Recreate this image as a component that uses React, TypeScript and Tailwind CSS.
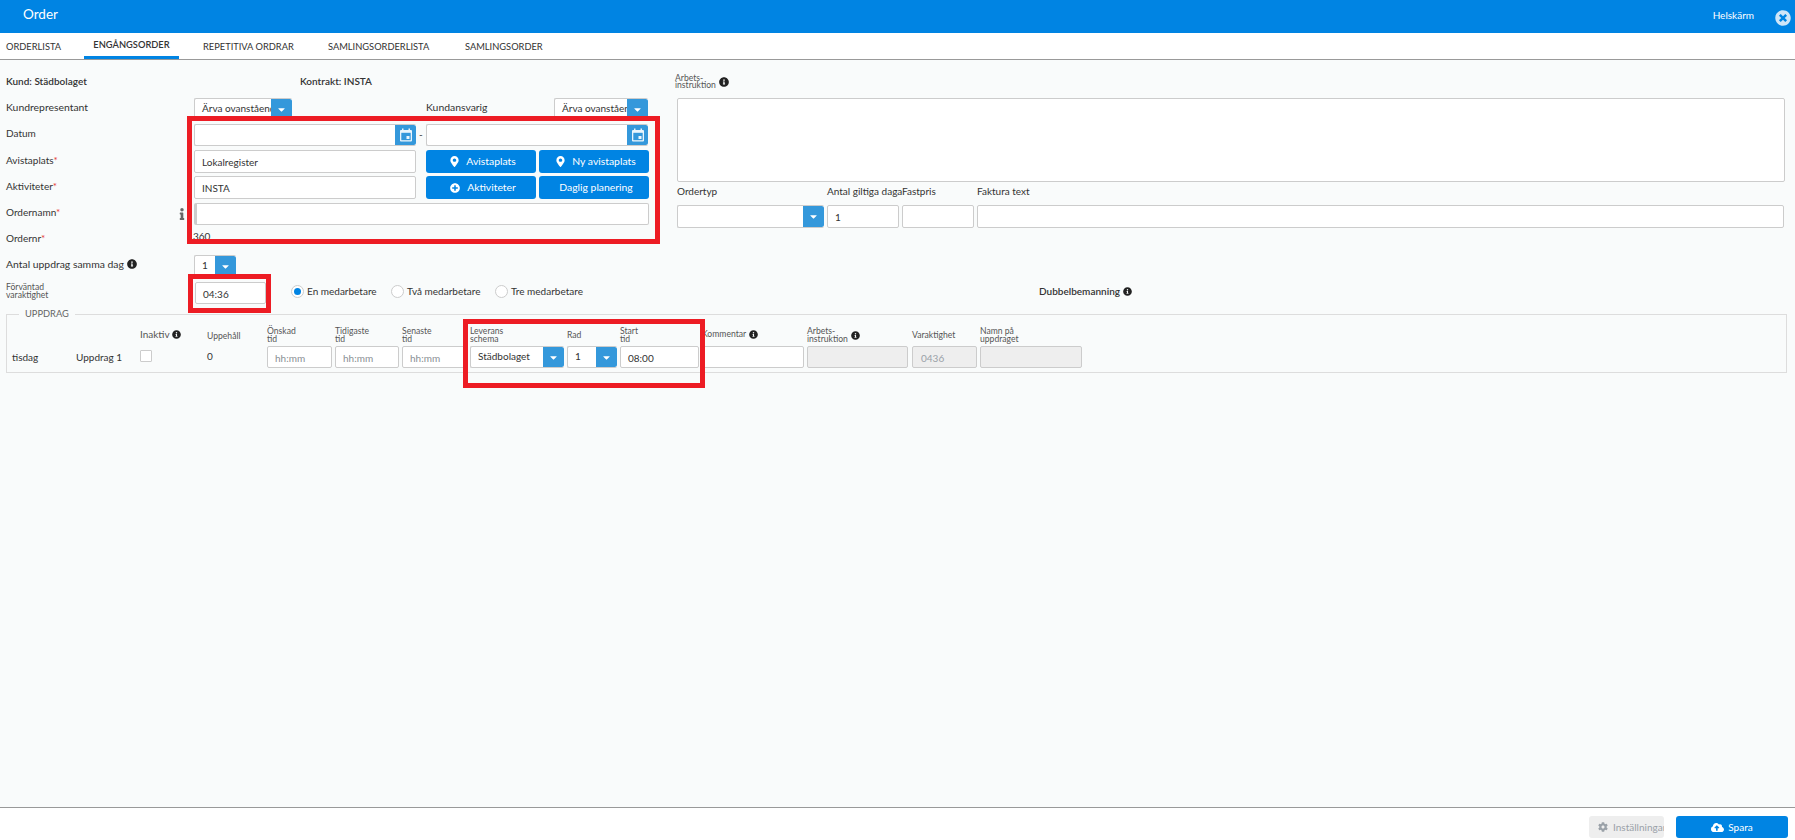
import React from 'react';
import { FaCaretDown, FaCloudUploadAlt, FaCog, FaInfo, FaInfoCircle, FaMapMarkerAlt, FaPlusCircle, FaTimesCircle } from 'react-icons/fa';

const CalendarIcon = () => (
  <svg width="14" height="14" viewBox="0 0 14 14" fill="none">
    <path d="M3 0.5h1.5V2h5V0.5H11V2h1a1 1 0 0 1 1 1v9.5a1 1 0 0 1-1 1H2a1 1 0 0 1-1-1V3a1 1 0 0 1 1-1h1z" fill="#eaf5fc" />
    <rect x="2.3" y="4.8" width="9.4" height="7.4" fill="#3498db" />
    <rect x="7.5" y="8" width="3" height="3" fill="#eaf5fc" />
  </svg>
);

const AddonButton = ({ children }: { children?: React.ReactNode }) => (
  <span className="flex h-full w-[21px] shrink-0 items-center justify-center rounded-r-[2px] bg-[#3498db] text-white">
    {children ?? <FaCaretDown className="h-[11px] w-[11px]" />}
  </span>
);

const Select = ({ value, className }: { value?: string; className: string }) => (
  <div className={`flex overflow-hidden rounded-[2px] border-l border-t border-b border-[#ccc] bg-white ${className}`}>
    <span className="min-w-0 flex-1 overflow-hidden whitespace-nowrap pl-[7px] leading-[18px]">{value}</span>
    <AddonButton />
  </div>
);

const DateInput = () => (
  <div className="flex h-[22px] w-[222px] overflow-hidden rounded-[2px] border-l border-t border-b border-[#ccc] bg-white">
    <span className="flex-1" />
    <AddonButton>
      <CalendarIcon />
    </AddonButton>
  </div>
);

const TextBox = ({ value, className, muted }: { value?: string; className: string; muted?: boolean }) => (
  <div className={`shrink-0 whitespace-nowrap rounded-[2px] border border-[#ccc] bg-white pl-[7px] leading-[22px] ${muted ? 'text-[#8a8f94]' : ''} ${className}`}>
    {value}
  </div>
);

const DisabledBox = ({ value, className }: { value?: string; className: string }) => (
  <div className={`h-[22px] shrink-0 rounded-[2px] border border-[#ccc] bg-[#eee] pl-[8px] leading-[22px] text-[#9aa1a8] ${className}`}>
    {value}
  </div>
);

const BlueButton = ({ icon, label }: { icon?: React.ReactNode; label: string }) => (
  <button className="flex h-[23px] w-[110px] items-center justify-center gap-[7px] rounded-[3px] bg-[#0084e3] pl-[4px] text-[10.4px] text-white">
    {icon}
    {label}
  </button>
);

const Required = () => <span className="text-[#e53935]">*</span>;

const FormRow = ({ label, h, mt, children }: { label: React.ReactNode; h: string; mt: string; children?: React.ReactNode }) => (
  <div className={`flex ${h} ${mt}`}>
    <div className="flex w-[188px] shrink-0 items-center pb-[3px]">{label}</div>
    {children}
  </div>
);

const SmallLabel = ({ children, className }: { children: React.ReactNode; className?: string }) => (
  <div className={`text-[8.6px] leading-[7.5px] text-[#555] ${className ?? ''}`}>{children}</div>
);

const Radio = ({ label, checked, className }: { label: string; checked?: boolean; className: string }) => (
  <div className={`flex items-center gap-[3px] ${className}`}>
    <span className="flex h-[13px] w-[13px] items-center justify-center rounded-full border border-[#ccc] bg-white">
      {checked && <span className="h-[7px] w-[7px] rounded-full bg-[#0084e3]" />}
    </span>
    {label}
  </div>
);

const Column = ({ head, width, children }: { head: React.ReactNode; width: string; children?: React.ReactNode }) => (
  <div className={`flex shrink-0 flex-col ${width}`}>
    <div className="flex h-[24px] items-end pb-[3px]">{head}</div>
    {children}
  </div>
);

export default function App() {
  return (
    <div className="relative flex h-[840px] w-[1795px] flex-col overflow-hidden bg-white font-['Lato',sans-serif] text-[10px] text-[#333]">
      {/* Header */}
      <div className="flex h-[33px] shrink-0 items-center bg-[#0084e3] pl-[23px] pr-[4px] text-white">
        <span className="pb-[5px] text-[13.5px]">Order</span>
        <span className="ml-auto pb-[3px]">Helskärm</span>
        <FaTimesCircle className="ml-[21px] mt-[3px] h-[16px] w-[16px] text-[#cfe6f8]" />
      </div>

      {/* Tabs */}
      <div className="flex h-[27px] shrink-0 items-start border-b border-[#999] pl-[6px] text-[9.3px]">
        <span className="mt-[7px] w-[78px]">ORDERLISTA</span>
        <span className="flex h-[26px] w-[95px] justify-center border-b-[3px] border-[#0084e3] pt-[5px] font-semibold">ENGÅNGSORDER</span>
        <span className="ml-[24px] mt-[7px] w-[125px]">REPETITIVA ORDRAR</span>
        <span className="mt-[7px] w-[137px]">SAMLINGSORDERLISTA</span>
        <span className="mt-[7px]">SAMLINGSORDER</span>
      </div>

      {/* Content */}
      <div className="flex min-h-0 flex-1 flex-col bg-[#f9fbfb] pl-[6px] pr-[8px] pt-[1px]">
        <div className="flex">
          <div className="w-[671px] shrink-0">
            <div className="mt-[11px] flex h-[18px] items-center font-semibold">
              <span className="w-[294px]">Kund: Städbolaget</span>
              <span>Kontrakt: INSTA</span>
            </div>
            <FormRow label={<span className="text-[10.4px]">Kundrepresentant</span>} h="h-[22px]" mt="mt-[8px]">
              <Select value="Ärva ovanstående" className="h-[22px] w-[98px]" />
              <span className="ml-[134px] w-[128px] pt-[2px] text-[10.4px]">Kundansvarig</span>
              <Select value="Ärva ovanstående" className="h-[22px] w-[94px]" />
            </FormRow>
            <FormRow label="Datum" h="h-[22px]" mt="mt-[4px]">
              <DateInput />
              <span className="w-[10px] pl-[3px] leading-[20px]">-</span>
              <DateInput />
            </FormRow>
            <FormRow label={<span>Avistaplats<Required /></span>} h="h-[23px]" mt="mt-[4px]">
              <TextBox value="Lokalregister" className="h-[23px] w-[222px]" />
              <div className="ml-[10px] flex gap-[3px]">
                <BlueButton icon={<FaMapMarkerAlt className="h-[11px] w-[9px]" />} label="Avistaplats" />
                <BlueButton icon={<FaMapMarkerAlt className="h-[11px] w-[9px]" />} label="Ny avistaplats" />
              </div>
            </FormRow>
            <FormRow label={<span>Aktiviteter<Required /></span>} h="h-[23px]" mt="mt-[3px]">
              <TextBox value="INSTA" className="h-[23px] w-[222px]" />
              <div className="ml-[10px] flex gap-[3px]">
                <BlueButton icon={<FaPlusCircle className="h-[10px] w-[10px]" />} label="Aktiviteter" />
                <BlueButton label="Daglig planering" />
              </div>
            </FormRow>
            <FormRow
              label={
                <span className="flex w-full items-center justify-between pr-[9px]">
                  <span>Ordernamn<Required /></span>
                  <FaInfo className="mt-[3px] h-[12px] w-[6px] text-[#666]" />
                </span>
              }
              h="h-[22px]"
              mt="mt-[4px]"
            >
              <TextBox className="h-[22px] w-[455px] border-l-[3px] border-l-[#ccc]" />
            </FormRow>
            <FormRow label={<span className="pt-[3px]">Ordernr<Required /></span>} h="h-[18px]" mt="mt-[4px]">
              <span className="-ml-[1px]">360</span>
            </FormRow>
            <FormRow
              label={
                <span className="flex items-center gap-[3px] text-[10.4px]">
                  Antal uppdrag samma dag <FaInfoCircle className="h-[10px] w-[10px] text-[#222]" />
                </span>
              }
              h="h-[22px]"
              mt="mt-[8px]"
            >
              <Select value="1" className="h-[22px] w-[42px]" />
            </FormRow>
          </div>

          {/* Right column */}
          <div className="min-w-0 flex-1">
            <div className="mt-[15px] flex h-[12px] items-center">
              <SmallLabel className="-ml-[2px]">Arbets-<br />instruktion</SmallLabel>
              <FaInfoCircle className="ml-[3px] h-[10px] w-[10px] text-[#222]" />
            </div>
            <div className="mt-[10px] h-[84px] w-[1108px] rounded-[2px] border border-[#ccc] bg-white" />
            <div className="flex h-[19px] items-center">
              <span className="w-[150px]">Ordertyp</span>
              <span className="w-[75px] whitespace-nowrap">Antal giltiga daga</span>
              <span className="w-[75px]">Fastpris</span>
              <span>Faktura text</span>
            </div>
            <div className="mt-[4px] flex gap-[3px]">
              <Select className="h-[23px] w-[147px]" />
              <TextBox value="1" className="h-[23px] w-[72px]" />
              <TextBox className="h-[23px] w-[72px]" />
              <TextBox className="h-[23px] w-[807px]" />
            </div>
          </div>
        </div>

        {/* Förväntad varaktighet */}
        <div className="mt-[5px] flex h-[22px] items-center">
          <SmallLabel className="w-[189px] pb-[3px]">Förväntad<br />varaktighet</SmallLabel>
          <TextBox value="04:36" className="h-[22px] w-[71px]" />
          <Radio label="En medarbetare" checked className="ml-[25px] w-[100px] pb-[3px]" />
          <Radio label="Två medarbetare" className="w-[104px] pb-[3px]" />
          <Radio label="Tre medarbetare" className="w-[544px] pb-[3px]" />
          <span className="flex items-center gap-[3px] pb-[3px] font-semibold">
            Dubbelbemanning <FaInfoCircle className="h-[9px] w-[9px] text-[#222]" />
          </span>
        </div>

        {/* Uppdrag */}
        <fieldset className="mt-[5px] h-[64px] w-[1781px] border border-[#ddd] pl-[5px]">
          <legend className="ml-[7px] px-[6px] text-[9.3px] leading-[10px] text-[#666]">UPPDRAG</legend>
          <div className="mt-[3px] flex items-start">
            <div className="mt-[24px] flex h-[22px] w-[128px] shrink-0 items-center">
              <span className="w-[64px]">tisdag</span>
              <span>Uppdrag 1</span>
            </div>
            <Column
              width="w-[67px]"
              head={
                <span className="flex items-center gap-[2px] pb-[1px] text-[#555]">
                  Inaktiv <FaInfoCircle className="h-[9px] w-[9px] text-[#222]" />
                </span>
              }
            >
              <span className="mt-[4px] h-[12px] w-[12px] rounded-[1px] border border-[#ccc] bg-white" />
            </Column>
            <Column width="w-[60px]" head={<SmallLabel className="mb-[3px]">Uppehåll</SmallLabel>}>
              <span className="leading-[20px]">0</span>
            </Column>
            <Column width="w-[68px]" head={<SmallLabel>Önskad<br />tid</SmallLabel>}>
              <TextBox value="hh:mm" muted className="h-[22px] w-[65px]" />
            </Column>
            <Column width="w-[67px]" head={<SmallLabel>Tidigaste<br />tid</SmallLabel>}>
              <TextBox value="hh:mm" muted className="h-[22px] w-[64px]" />
            </Column>
            <Column width="w-[68px]" head={<SmallLabel>Senaste<br />tid</SmallLabel>}>
              <TextBox value="hh:mm" muted className="h-[22px] w-[65px]" />
            </Column>
            <Column width="w-[97px]" head={<SmallLabel>Leverans<br />schema</SmallLabel>}>
              <Select value="Städbolaget" className="h-[22px] w-[94px]" />
            </Column>
            <Column width="w-[53px]" head={<SmallLabel className="mb-[4px]">Rad</SmallLabel>}>
              <Select value="1" className="h-[22px] w-[50px]" />
            </Column>
            <Column width="w-[82px]" head={<SmallLabel>Start<br />tid</SmallLabel>}>
              <TextBox value="08:00" className="h-[22px] w-[79px]" />
            </Column>
            <Column
              width="w-[105px]"
              head={
                <span className="flex items-center gap-[3px] pb-[4px]">
                  <SmallLabel>Kommentar</SmallLabel>
                  <FaInfoCircle className="h-[9px] w-[9px] text-[#222]" />
                </span>
              }
            >
              <TextBox className="h-[22px] w-[102px]" />
            </Column>
            <Column
              width="w-[105px]"
              head={
                <span className="flex items-center gap-[3px]">
                  <SmallLabel>Arbets-<br />instruktion</SmallLabel>
                  <FaInfoCircle className="h-[9px] w-[9px] text-[#222]" />
                </span>
              }
            >
              <DisabledBox className="w-[101px]" />
            </Column>
            <Column width="w-[68px]" head={<SmallLabel className="mb-[4px]">Varaktighet</SmallLabel>}>
              <DisabledBox value="0436" className="w-[65px]" />
            </Column>
            <Column width="w-[102px]" head={<SmallLabel>Namn på<br />uppdraget</SmallLabel>}>
              <DisabledBox className="w-[102px]" />
            </Column>
          </div>
        </fieldset>
      </div>

      {/* Footer */}
      <div className="flex h-[33px] shrink-0 items-start justify-end gap-[12px] border-t border-[#999] pr-[7px] pt-[8px]">
        <button className="flex h-[22px] w-[75px] items-center gap-[5px] overflow-hidden whitespace-nowrap rounded-[3px] bg-[#eee] pl-[9px] text-[#9aa1a8]">
          <FaCog className="h-[10px] w-[10px] shrink-0" />
          Inställningar
        </button>
        <button className="flex h-[22px] w-[112px] items-center justify-center gap-[4px] rounded-[3px] bg-[#0084e3] text-white">
          <FaCloudUploadAlt className="h-[13px] w-[13px]" />
          Spara
        </button>
      </div>

      {/* Red annotation boxes */}
      <div className="absolute left-[187px] top-[116px] h-[128px] w-[473px] border-[5px] border-[#ed1c24]" />
      <div className="absolute left-[188px] top-[274px] h-[39px] w-[83px] border-[5px] border-[#ed1c24]" />
      <div className="absolute left-[463px] top-[319px] h-[69px] w-[242px] border-[5px] border-[#ed1c24]" />
    </div>
  );
}
